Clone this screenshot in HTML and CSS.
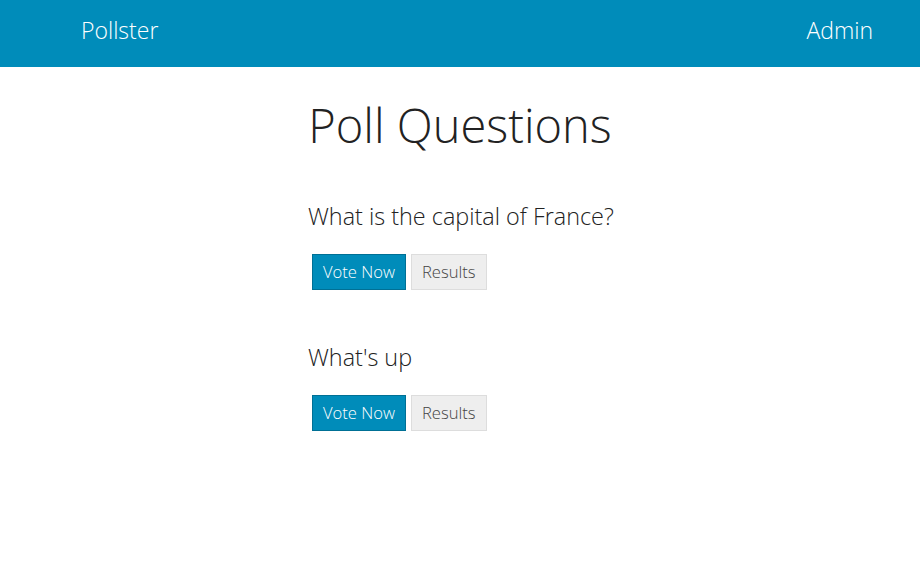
FILE: index.html
```html
<!DOCTYPE html>
<html>
<head>
<meta charset="utf-8">
<link rel="stylesheet" href="styles.css">
</head>
<body>
<nav class="topbar">
  <a class="brand">Pollster</a>
  <a class="admin">Admin</a>
</nav>
<main class="content">
  <h1 class="title">Poll Questions</h1>
  <section class="poll">
    <h2 class="question">What is the capital of France?</h2>
    <div class="actions">
      <a class="btn btn-primary">Vote Now</a>
      <a class="btn btn-secondary">Results</a>
    </div>
  </section>
  <section class="poll">
    <h2 class="question">What's up</h2>
    <div class="actions">
      <a class="btn btn-primary">Vote Now</a>
      <a class="btn btn-secondary">Results</a>
    </div>
  </section>
</main>
</body>
</html>
```
FILE: styles.css
```css
* { box-sizing: border-box; }
body {
  margin: 0;
  font-family: "Open Sans", "Liberation Sans", sans-serif;
  font-weight: 300;
  color: #222;
  background: #fff;
}
.topbar {
  height: 67px;
  background: #008cba;
  display: flex;
  align-items: center;
  justify-content: space-between;
  padding: 0 47px 8px 81px;
  color: #fff;
  font-size: 23px;
}
.content {
  width: 304px;
  margin: 0 auto;
}
.title {
  margin: 26px -100px 0;
  text-align: center;
  font-size: 47px;
  font-weight: 300;
  line-height: 64px;
}
.poll { margin-top: 43px; }
.poll + .poll { margin-top: 51px; }
.question {
  margin: 0;
  font-size: 23.4px;
  font-weight: 300;
  line-height: 32px;
  white-space: nowrap;
}
.actions {
  display: flex;
  gap: 5px;
  margin: 22px 0 0 4px;
}
.btn {
  display: inline-block;
  height: 36px;
  line-height: 34px;
  padding: 0 10px;
  font-size: 16.6px;
  border: 1px solid;
}
.btn-primary {
  background: #008cba;
  border-color: #007095;
  color: #fff;
}
.btn-secondary {
  background: #eee;
  border-color: #ddd;
  color: #444;
}
```
